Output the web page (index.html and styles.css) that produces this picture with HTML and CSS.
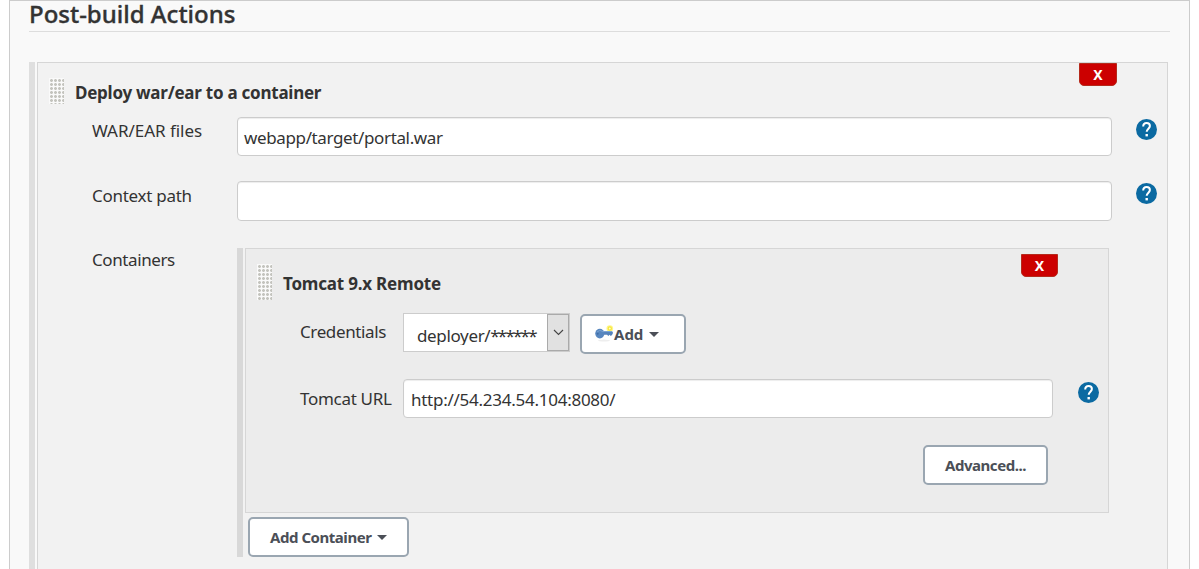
FILE: index.html
```
<!DOCTYPE html>
<html lang="en">
<head>
<meta charset="utf-8">
<title>Post-build Actions</title>
<link rel="stylesheet" href="styles.css">
</head>
<body>
<svg class="defs" width="0" height="0" aria-hidden="true">
  <symbol id="help" viewBox="0 0 21 21">
    <circle cx="10.5" cy="10.5" r="10.5" fill="#0b6aa2"/>
    <path d="M7.2 7.6C7.2 5.3 8.6 4 10.6 4s3.3 1.200 3.300 3c0 2.500-3.200 2.900-3.200 5.800" fill="none" stroke="#fff" stroke-width="2"/>
    <rect x="9.500" y="15" width="2.400" height="2.400" fill="#fff"/>
  </symbol>
</svg>
<main class="config">
  <h1 class="heading"><span class="t-heading">Post-build Actions</span></h1>
  <section class="block block-outer">
    <div class="panel panel-outer">
      <button class="remove remove-outer">X</button>
      <header class="title title-outer"><i class="grip grip-outer"></i><b class="t-deploy">Deploy war/ear to a container</b></header>
      <div class="row row-war">
        <label class="label"><span class="t-war">WAR/EAR files</span></label>
        <div class="field"><span class="t-path">webapp/target/portal.war</span></div>
        <svg class="help"><use href="#help"/></svg>
      </div>
      <div class="row row-context">
        <label class="label"><span class="t-context">Context path</span></label>
        <div class="field"></div>
        <svg class="help"><use href="#help"/></svg>
      </div>
      <div class="row row-containers">
        <label class="label"><span class="t-containers">Containers</span></label>
        <section class="block block-inner">
          <div class="stack">
            <div class="panel panel-inner">
              <button class="remove remove-inner">X</button>
              <header class="title title-inner"><i class="grip grip-inner"></i><b class="t-tomcat">Tomcat 9.x Remote</b></header>
              <div class="subrow row-cred">
                <label class="sublabel"><span class="t-cred">Credentials</span></label>
                <div class="select"><div class="value"><span class="t-deployer">deployer/<span class="mask">******</span></span></div>
                  <div class="drop"><svg width="11" height="7" viewBox="0 0 11 7"><path d="M1 1l4.500 4.500L10 1" fill="none" stroke="#444" stroke-width="1.100"/></svg></div>
                </div>
                <button class="btn btn-add">
                  <svg class="key" width="19" height="18" viewBox="0 0 19 18">
                    <ellipse cx="9" cy="15.600" rx="6" ry="1" fill="#eee"/>
                    <circle cx="14.800" cy="3.500" r="3.300" fill="#fff58a"/>
                    <circle cx="14.800" cy="3.500" r="1.600" fill="#fffbd0" stroke="#f5e73a" stroke-width="1.200"/>
                    <path d="M8 6.500h9.500l.5 1.500-1 2-1.200 1-1.200-1.200-1.300 1.200-1.200-1.200H8z" fill="#5583bb"/>
                    <ellipse cx="4.800" cy="8.600" rx="4.600" ry="4.800" fill="#5887bf"/>
                    <path d="M2 7q2.500-3 6-.500h9" fill="none" stroke="#7ba3d2"/>
                    <circle cx="2.700" cy="8.700" r="1" fill="#3f6ca6"/>
                  </svg><span class="t-add">Add</span><i class="caret"></i>
                </button>
              </div>
              <div class="subrow row-url">
                <label class="sublabel"><span class="t-url">Tomcat URL</span></label>
                <div class="field"><span class="t-http">http://54.234.54.104:8080/</span></div>
                <svg class="help"><use href="#help"/></svg>
              </div>
              <div class="actions"><button class="btn btn-advanced"><span class="t-adv">Advanced...</span></button></div>
            </div>
            <button class="btn btn-container"><span class="t-addc">Add Container</span><i class="caret"></i></button>
          </div>
        </section>
      </div>
    </div>
  </section>
</main>
</body>
</html>
```
FILE: styles.css
```
* { box-sizing: border-box; }
body { margin: 0; background: #fff; color: #333; font: 17px/24px "Noto Sans", "Open Sans", sans-serif; height: 569px; overflow: hidden; }
button { font: inherit; margin: 0; padding: 0; }
.defs { position: absolute; }
[class^="t-"] { white-space: nowrap; }
.t-heading { -webkit-text-stroke: .35px #333; }
.t-deploy { letter-spacing: -.25px; }
.t-war { letter-spacing: -.04px; }
.t-path { letter-spacing: -.37px; }
.t-context { letter-spacing: -.28px; }
.t-containers { letter-spacing: -.4px; }
.t-tomcat { letter-spacing: -.2px; }
.t-cred { letter-spacing: -.38px; }
.t-deployer { letter-spacing: -.35px; }
.mask { letter-spacing: -1.8px; }
.t-url { letter-spacing: -.3px; }
.t-http { letter-spacing: -.26px; }
.t-adv, .t-addc { letter-spacing: -.46px; }
.config { margin: 0 9px; width: 1181px; height: 569px; border: 1px solid #ccc; border-bottom: 0; background: #f9f9f9; padding: 0 19px; overflow: hidden; }
.heading { margin: 0; height: 31px; border-bottom: 1px solid #ddd; font-size: 24px; font-weight: 500; line-height: 26px; }
.block { display: flex; gap: 2px; }
.block-outer { margin-top: 30px; width: 1139px; height: 600px; border-left: 6px solid #dfdfdf; padding-left: 2px; }
.panel { position: relative; border: 1px solid #d6d6d6; }
.panel-outer { flex: 1; background: #f2f2f2; }
.title { display: flex; font-size: 17px; }
.title-outer { height: 54px; padding: 15px 0 0 11px; gap: 11px; line-height: 30px; }
.title-inner { height: 64px; padding: 15px 0 0 11px; gap: 11px; line-height: 40px; }
.grip { width: 15px; background: radial-gradient(circle at 2.5px 2.5px, #c4c4be 1px, transparent 1.8px) 0 0 / 4px 4px #fafafa; }
.grip-outer { height: 26px; }
.grip-inner { height: 36px; }
.remove { position: absolute; background: #c00; color: #fff; border: 1px solid #b52a1c; border-radius: 0 0 5px 5px; font-size: 14px; font-weight: 700; line-height: 21px; height: 23px; }
.remove-outer { width: 38px; top: 0; right: 50px; }
.remove-inner { width: 37px; top: 5px; right: 50px; }
.row { display: flex; padding-left: 54px; }
.label { width: 145px; flex: none; padding-top: 2px; }
.row-war { height: 64px; }
.row-context { height: 67px; }
.row-context .label { padding-top: 3px; }
.row-containers .label { padding-top: 0; }
.field { height: 39px; background: #fff; border: 1px solid #ccc; border-radius: 4px; box-shadow: inset 0 1px 1px rgba(0,0,0,.075); padding: 0 6px; line-height: 39px; }
.row > .field { width: 875px; }
.row-context > .field { height: 40px; }
.help { width: 21px; height: 21px; margin: 2px 0 0 24px; flex: none; }
.block-inner { width: 872px; height: 309px; border-left: 6px solid #d8d8d8; padding-left: 2px; }
.stack { flex: 1; }
.panel-inner { height: 265px; background: #ececec; }
.subrow { display: flex; padding-left: 54px; }
.sublabel { width: 103px; flex: none; padding-top: 7px; }
.row-cred { height: 66px; }
.select { display: flex; width: 167px; height: 39px; border: 1px solid #ccc; background: #fff; }
.value { flex: 1; padding: 4px 0 0 13px; line-height: 36px; height: 31px; overflow: hidden; }
.drop { width: 22px; flex: none; border: 1px solid #aaa; background: #e1e1e1; display: grid; place-items: center; }
.btn { display: flex; align-items: center; height: 40px; border: 2px solid #9aa6b1; border-radius: 5px; background: #fff; color: #4b4f57; font-size: 15px; font-weight: 700; }
.btn-add { width: 106px; margin: 1px 0 0 10px; padding-left: 13px; }
.caret { border: 5px solid transparent; border-top-color: #4b4f57; border-bottom: 0; margin-left: 6px; }
.row-url .sublabel { padding-top: 8px; }
.row-url .field { width: 650px; padding-left: 7px; }
.row-url .help { margin: 3px 0 0 25px; }
.actions { display: flex; justify-content: flex-end; padding: 27px 60px 0 0; }
.btn-advanced { width: 125px; padding-left: 20px; }
.btn-container { width: 161px; margin: 4px 0 0 3px; padding-left: 20px; }
```
